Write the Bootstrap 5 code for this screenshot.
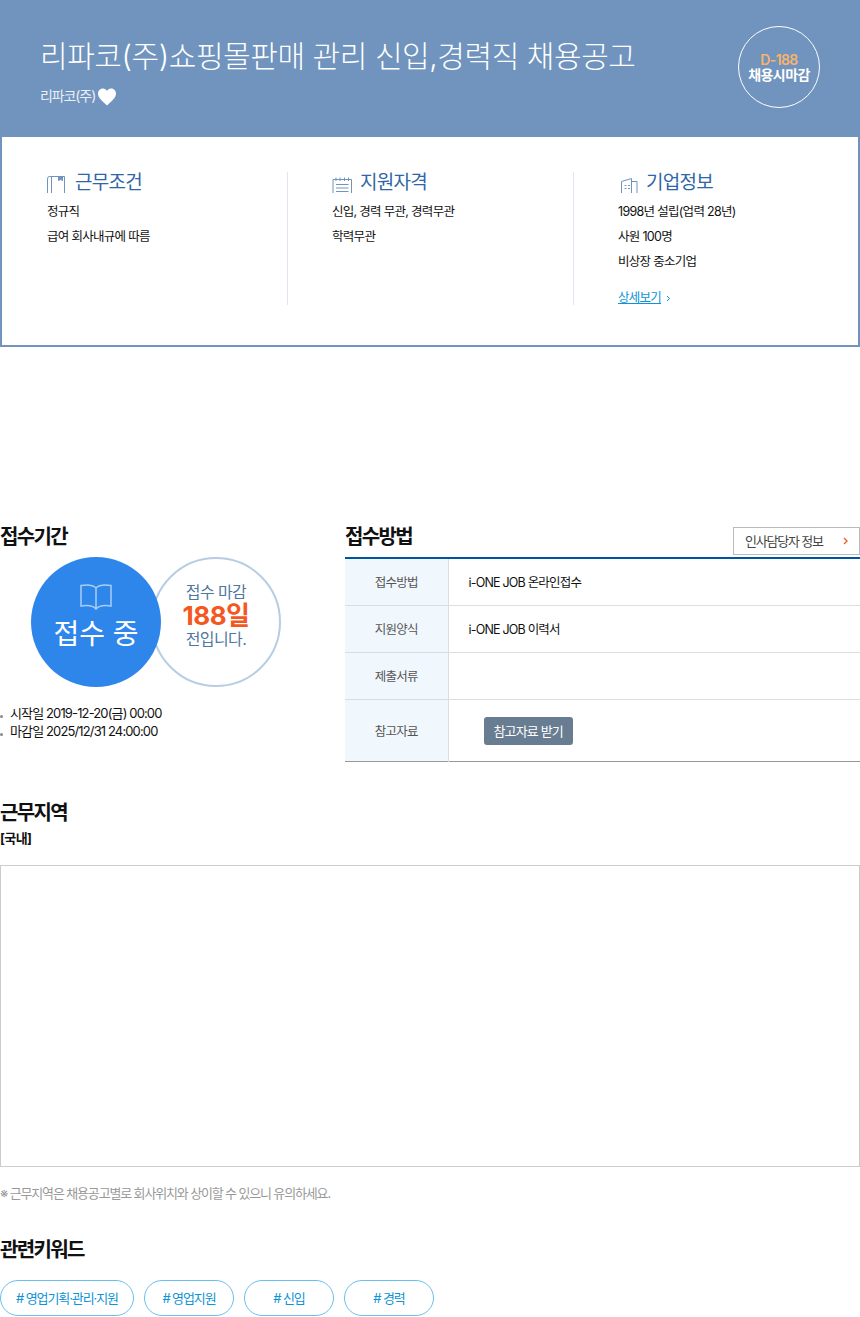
<!DOCTYPE html>
<html lang="ko">
<head>
  <meta charset="UTF-8">
  <title>채용공고</title>
  <link href="https://cdn.jsdelivr.net/npm/bootstrap@5.3.0/dist/css/bootstrap.min.css" rel="stylesheet" />
  <style>
    body { font-family: Inter, "Noto Sans CJK KR", sans-serif; color: #111; font-size: 13px; letter-spacing: -0.6px; width: 860px; height: 1317px; overflow: hidden; }
    .job-head { background: #7094bd; height: 137px; padding: 0 40px; color: #fff; }
    .job-title { font-size: 30px; font-weight: 300; line-height: 40px; margin: 36px 0 0; letter-spacing: -0.43px; }
    .job-company { font-size: 14px; line-height: 20px; margin-top: 10px; color: #e9eff6; letter-spacing: -1.1px; gap: 3px; }
    .job-company svg { margin-top: 2px; }
    .d-circle { width: 82px; height: 82px; border: 1px solid #fff; border-radius: 50%; margin: 26px 0 0; line-height: 15px; font-weight: 600; font-size: 14px; }
    .d-circle b { color: #f7b36b; font-weight: 600; }
    .summary { height: 210px; border: 2px solid #7094bd; border-top: 0; padding-top: 35px; }
    .sum-col { height: 133px; border-right: 1px solid #dfe6ef; }
    .sum-first { width: 286px; padding-left: 45px; }
    .sum-mid { width: 286px; padding-left: 44px; }
    .sum-last { width: 282px; padding-left: 44px; border-right: 0; }
    .sum-title { font-size: 19px; line-height: 20px; padding-top: 1px; color: #2f66a8; font-weight: 400; margin: 0 0 6px; letter-spacing: -0.7px; }
    .sum-col p { line-height: 25px; margin: 0; font-size: 12.5px; letter-spacing: -0.7px; }
    .more-link { color: #0d93d6; display: inline-block; margin-top: 14px; line-height: 20px; font-size: 12.5px; letter-spacing: -0.75px; }
    .more-chev { margin-left: 2px; }
    .sec-title { font-size: 20px; font-weight: 700; line-height: 26px; margin: 0; letter-spacing: -1.65px; }
    .apply-wrap { margin-top: 177px; }
    .left-pane { width: 345px; }
    .right-pane { width: 515px; }
    .circles { height: 130px; margin-top: 7px; padding-left: 31px; }
    .circle-on { width: 130px; height: 130px; border-radius: 50%; background: #2f86ea; color: #fff; font-size: 28px; line-height: 34px; position: relative; z-index: 1; letter-spacing: 0; padding-bottom: 10px; }
    .circle-on svg { margin-bottom: 6px; }
    .circle-off { width: 130px; height: 130px; border-radius: 50%; border: 2px solid #b6cde3; margin-left: -10px; color: #4f77a0; font-size: 16px; line-height: 18px; padding-bottom: 13px; }
    .circle-off b { display: block; color: #f4581f; font-size: 26px; line-height: 24px; font-weight: 700; letter-spacing: -0.5px; margin: 3px 0 2px; }
    .period { margin: 17px 0 0; padding: 0; list-style: none; line-height: 18px; letter-spacing: -0.87px; }
    .period li { padding-left: 10px; position: relative; }
    .period li::before { content: ""; position: absolute; left: 0; top: 11px; width: 3px; height: 3px; background: #888; border-radius: 50%; }
    .method-head { height: 33px; }
    .hr-btn { width: 127px; height: 28px; border: 1px solid #bbb; color: #444; padding: 0 11px; line-height: 26px; margin-top: 3px; letter-spacing: -1.2px; }
    .method-table { width: 100%; margin: 0; border-top: 2px solid #00539f; border-bottom: 1px solid #999; font-size: 12.5px; letter-spacing: -0.8px; }
    .method-table th { width: 103px; background: #f1f8fd; font-weight: 400; color: #555; text-align: center; border-right: 1px solid #ddd; padding-top: 4px; }
    .method-table td { padding: 4px 0 0 20px; }
    .method-table tr { height: 47px; border-bottom: 1px solid #ddd; }
    .method-table tr:last-child { height: 62px; border-bottom: 0; }
    .method-table tr:last-child td { padding-top: 2px; }
    .method-table tr:last-child th { padding-top: 6px; }
    .file-btn { background: #687d91; color: #fff; border-radius: 3px; padding: 0 10px; line-height: 28px; height: 28px; margin-left: 15px; font-size: 13px; border: 0; letter-spacing: -0.85px; }
    .area-sec { margin-top: 38px; }
    .area-kind { margin-top: 3px; }
    .map-box { height: 302px; border: 1px solid #ccc; margin-top: 17px; }
    .area-note { color: #999; margin: 17px 0 0; line-height: 18px; letter-spacing: -1.15px; }
    .keyword-sec { margin-top: 35px; }
    .tag-row { gap: 10px; margin-top: 17px; }
    .tag-pill { height: 36px; border: 1px solid #69bfee; border-radius: 18px; color: #0d93d6; line-height: 34px; text-align: center; width: 90px; letter-spacing: -1.1px; }
    .tag-wide { width: 134px; }
  </style>
</head>
<body>
  <header class="job-head d-flex justify-content-between">
    <div>
      <h1 class="job-title">리파코(주)쇼핑몰판매 관리 신입,경력직 채용공고</h1>
      <div class="job-company d-flex align-items-center">리파코(주)
        <svg width="18" height="18" viewBox="0 0 18 17"><path d="M9 17C4 12 0 9.500 0 5C0 2 2.500 0 5 0c2 0 3.200 1 4 2.500C9.800 1 11 0 13 0c2.500 0 5 2 5 5C18 9.500 14 12 9 17z" fill="#fff"/></svg>
      </div>
    </div>
    <div class="d-circle d-flex flex-column align-items-center justify-content-center">
      <b>D-188</b><span>채용시마감</span>
    </div>
  </header>

  <section class="summary d-flex">
    <div class="sum-col sum-first">
      <h2 class="sum-title d-flex align-items-end gap-2">
        <svg width="20" height="20" viewBox="0 0 20 20" fill="none" stroke="#7094bd" stroke-width="1"><path d="M.5 20V5.500Q.5 3.500 2.500 3.500H17.500V20M4.500 3.500V20"/><path d="M11.500 3.500V7.500L13.500 6.500L15.500 7.500V3.500z" fill="#7094bd"/></svg>
        근무조건</h2>
      <p>정규직</p>
      <p>급여 회사내규에 따름</p>
    </div>
    <div class="sum-col sum-mid">
      <h2 class="sum-title d-flex align-items-end gap-2">
        <svg width="20" height="20" viewBox="0 0 20 20" fill="none" stroke="#7094bd" stroke-width="1"><path d="M1 20V6.500H19.500V20M4 4.500V8M8 4.500V8M12.500 4.500V8M16.500 4.500V8M4 11.500H16.500M4 15H16.500M4 18.500H16.500"/></svg>
        지원자격</h2>
      <p>신입, 경력 무관, 경력무관</p>
      <p>학력무관</p>
    </div>
    <div class="sum-col sum-last">
      <h2 class="sum-title d-flex align-items-end gap-2">
        <svg width="20" height="20" viewBox="0 0 20 20" fill="none" stroke="#7094bd" stroke-width="1"><path d="M3.500 20V8.500L13.500 5.500V20M13.500 8.500H19V20M6.500 12.500H8.500M10 12.500H12M6.500 15.500H8.500M10 15.500H12"/></svg>
        기업정보</h2>
      <p>1998년 설립(업력 28년)</p>
      <p>사원 100명</p>
      <p>비상장 중소기업</p>
      <a class="more-link" href="#">상세보기</a>
      <svg class="more-chev" width="5" height="7" viewBox="0 0 5 7" fill="none" stroke="#0d93d6" stroke-width="1"><path d="M1 1L3.500 3.500L1 6"/></svg>
    </div>
  </section>

  <section class="apply-wrap d-flex">
    <div class="left-pane">
      <h2 class="sec-title">접수기간</h2>
      <div class="circles d-flex">
        <div class="circle-on d-flex flex-column align-items-center justify-content-center">
          <svg width="34" height="28" viewBox="0 0 34 28" fill="none" stroke="#a9cdf6" stroke-width="1.500"><path d="M17 5C14 2 8 1.500 2 2.500V23C8 22 14 22.500 17 26C20 22.500 26 22 32 23V2.500C26 1.500 20 2 17 5zM17 5V26"/></svg>
          <span>접수 중</span>
        </div>
        <div class="circle-off d-flex flex-column align-items-center justify-content-center">
          <span>접수 마감</span><b>188일</b><span>전입니다.</span>
        </div>
      </div>
      <ul class="period">
        <li>시작일 2019-12-20(금) 00:00</li>
        <li>마감일 2025/12/31 24:00:00</li>
      </ul>
    </div>
    <div class="right-pane">
      <div class="method-head d-flex justify-content-between align-items-start">
        <h2 class="sec-title">접수방법</h2>
        <div class="hr-btn d-flex justify-content-between align-items-center"><span>인사담당자 정보</span>
          <svg width="5" height="8" viewBox="0 0 5 8" fill="none" stroke="#f4581f" stroke-width="1.300"><path d="M1 1L4 4L1 7"/></svg>
        </div>
      </div>
      <table class="method-table">
        <tr><th>접수방법</th><td>i-ONE JOB 온라인접수</td></tr>
        <tr><th>지원양식</th><td>i-ONE JOB 이력서</td></tr>
        <tr><th>제출서류</th><td></td></tr>
        <tr><th>참고자료</th><td><button class="file-btn" type="button">참고자료 받기</button></td></tr>
      </table>
    </div>
  </section>

  <section class="area-sec">
    <h2 class="sec-title">근무지역</h2>
    <div class="area-kind fw-bold">[국내]</div>
    <div class="map-box"></div>
    <p class="area-note">※ 근무지역은 채용공고별로 회사위치와 상이할 수 있으니 유의하세요.</p>
  </section>

  <section class="keyword-sec">
    <h2 class="sec-title">관련키워드</h2>
    <div class="tag-row d-flex">
      <div class="tag-pill tag-wide"># 영업기획·관리·지원</div>
      <div class="tag-pill"># 영업지원</div>
      <div class="tag-pill"># 신입</div>
      <div class="tag-pill"># 경력</div>
    </div>
  </section>
  <script src="https://cdn.jsdelivr.net/npm/bootstrap@5.3.0/dist/js/bootstrap.bundle.min.js"></script>
</body>
</html>
